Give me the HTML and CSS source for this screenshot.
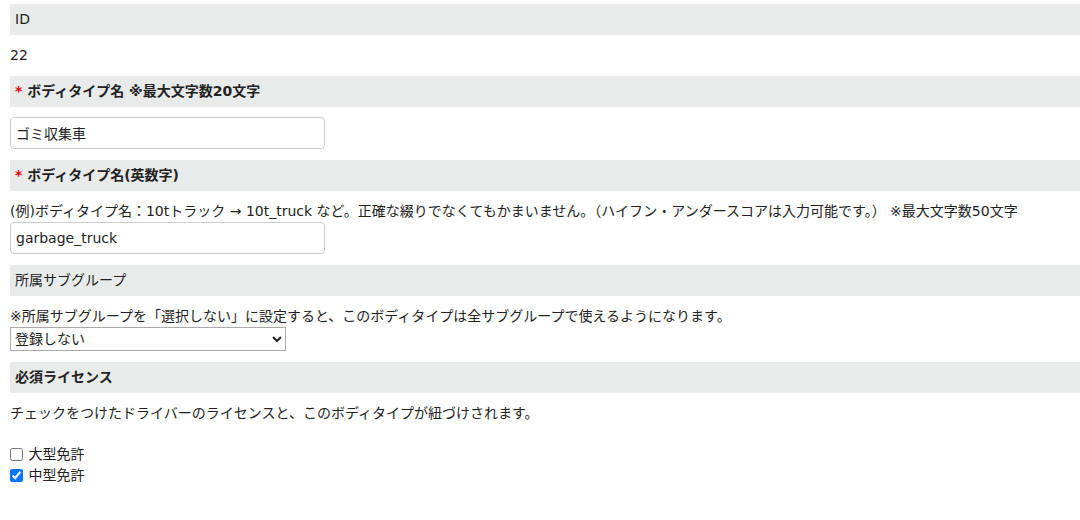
FILE: index.html
```html
<!DOCTYPE html>
<html lang="ja">
<head>
  <meta charset="UTF-8" />
  <meta name="viewport" content="width=device-width, initial-scale=1.0"/>
  <title>ボディタイプ編集</title>
  <link rel="stylesheet" href="styles.css">
</head>
<body>
  <form class="form-body">
    <dl>
      <dt>ID</dt>
      <dd>22</dd>

      <dt class="req"><span class="mark">*</span> ボディタイプ名 ※最大文字数20文字</dt>
      <dd>
        <input type="text" class="txt" name="name" value="ゴミ収集車">
      </dd>

      <dt class="req"><span class="mark">*</span> ボディタイプ名(英数字)</dt>
      <dd>
        <p class="note">(例)ボディタイプ名：10tトラック → 10t_truck など。正確な綴りでなくてもかまいません。（ハイフン・アンダースコアは入力可能です。） ※最大文字数50文字</p>
        <input type="text" class="txt" name="name_en" value="garbage_truck">
      </dd>

      <dt>所属サブグループ</dt>
      <dd>
        <p class="note">※所属サブグループを「選択しない」に設定すると、このボディタイプは全サブグループで使えるようになります。</p>
        <select class="sel" name="subgroup">
          <option>登録しない</option>
        </select>
      </dd>

      <dt class="req">必須ライセンス</dt>
      <dd>
        <p class="note">チェックをつけたドライバーのライセンスと、このボディタイプが紐づけされます。</p>
        <br>
        <label class="chk"><input type="checkbox" name="lic1"> 大型免許</label>
        <label class="chk"><input type="checkbox" name="lic2" checked> 中型免許</label>
      </dd>
    </dl>
  </form>
</body>
</html>
```

FILE: styles.css
```css
body {
  font-family: "DejaVu Sans", "Noto Sans CJK JP", sans-serif;
  font-size: 14px;
  line-height: 21px;
  color: #222;
  margin: 4px 0 0 10px;
  background: #fff;
}
dl {
  margin: 0;
}
dt {
  background: #e9ebeb;
  height: 31px;
  line-height: 30px;
  padding: 0 0 0 5px;
}
dt.req {
  font-weight: bold;
}
.mark {
  color: #e60012;
}
dd {
  margin: 0;
  padding: 10px 0;
  line-height: 20px;
}
.note {
  margin: 0 0 1px;
}
.txt {
  display: block;
  box-sizing: border-box;
  width: 315px;
  height: 32px;
  margin: 0 0 1px;
  padding: 0 5px;
  border: 1px solid #ccc;
  border-radius: 4px;
  font-family: inherit;
  font-size: 14px;
  color: #222;
}
.sel {
  display: block;
  box-sizing: border-box;
  width: 276px;
  height: 24px;
  margin: 0 0 1px;
  border: 1px solid #aaa;
  border-radius: 0;
  font-family: inherit;
  font-size: 14px;
  color: #222;
  background: #fff;
}
dd:first-of-type {
  padding-bottom: 11px;
}
.chk {
  display: block;
  line-height: 21px;
}
.chk input {
  margin: 0 1px 0 0;
  width: 13px;
  height: 13px;
  vertical-align: -2px;
}
```
